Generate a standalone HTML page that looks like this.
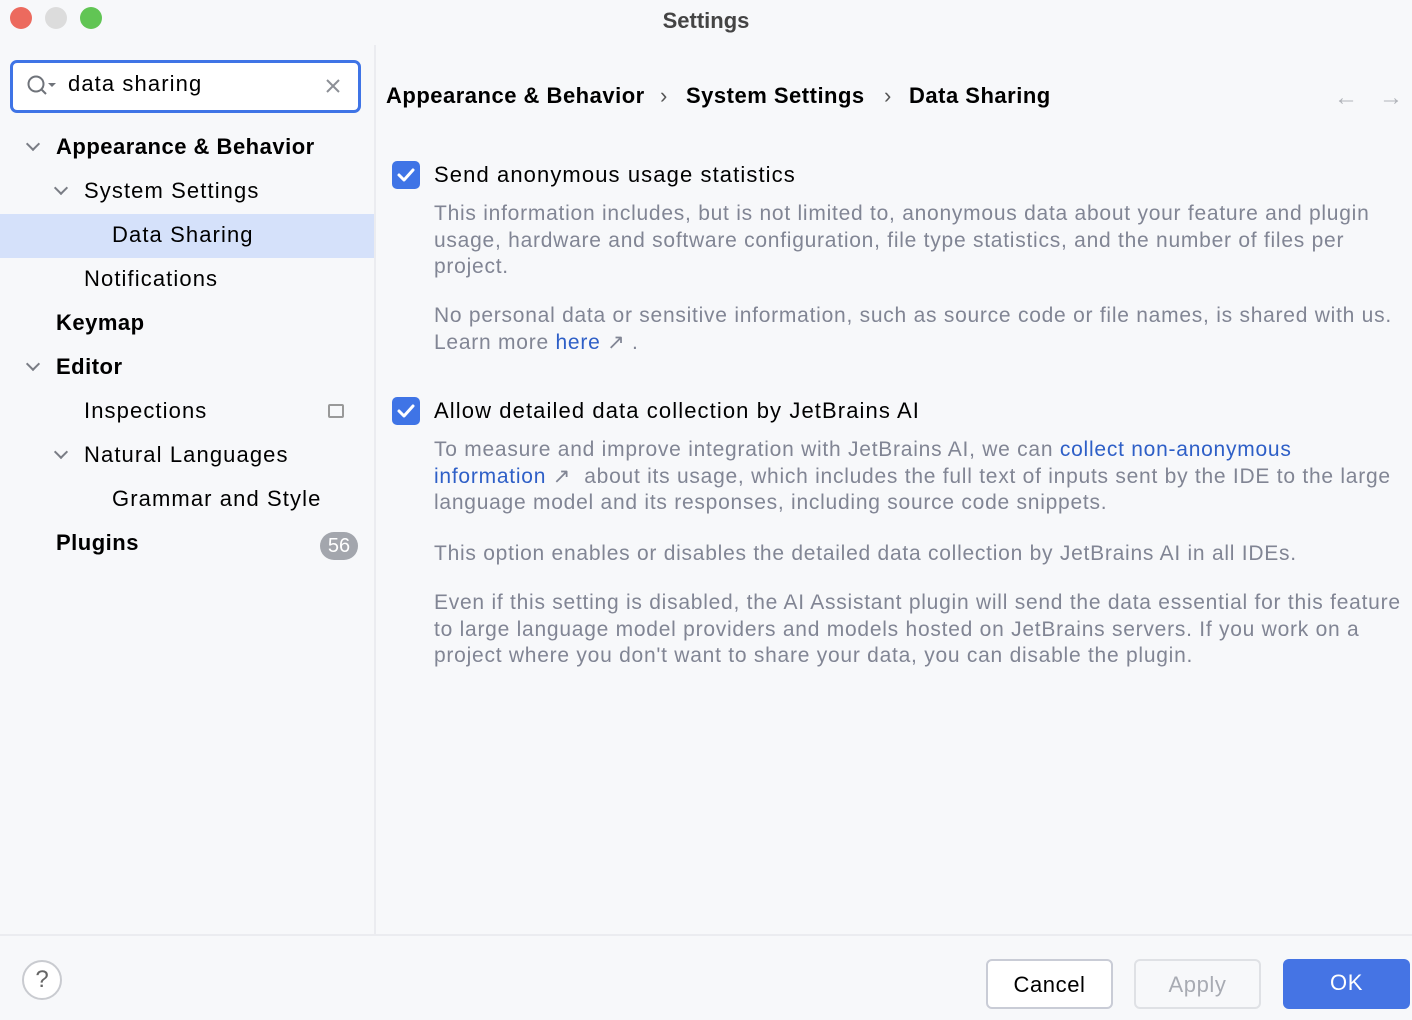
<!DOCTYPE html>
<html><head><meta charset="utf-8"><style>
*{margin:0;padding:0;box-sizing:border-box}
body{width:1412px;height:1020px;background:#f7f8fa;font-family:"Liberation Sans",sans-serif;position:relative;overflow:hidden;color:#000}
.a{position:absolute;white-space:nowrap}
.dot{position:absolute;top:7px;width:22px;height:22px;border-radius:50%}
.t{font-size:22px;letter-spacing:1.1px}
.b{font-weight:bold;letter-spacing:0.5px}
.g{color:#818594;font-size:21px;letter-spacing:0.75px;line-height:26.5px}
.lk{color:#2e5fc7}
.chev{position:absolute;width:10px;height:10px;border-right:2px solid #7a7d85;border-bottom:2px solid #7a7d85;transform:rotate(45deg)}
.cb{position:absolute;width:28px;height:28px;border-radius:5px;background:#3f74e6}
.btn{position:absolute;top:959px;height:50px;border-radius:6px;font-size:22px;text-align:center;line-height:48px;letter-spacing:0.6px}
</style></head><body>
<div class="dot" style="left:10px;background:#ec6a5e"></div>
<div class="dot" style="left:45px;background:#dcdcdc"></div>
<div class="dot" style="left:80px;background:#61c554"></div>
<div class="a" style="left:0;width:1412px;text-align:center;top:8px;font-size:22px;font-weight:bold;color:#444">Settings</div>
<div class="a" style="left:374px;top:45px;width:2px;height:890px;background:#ebecf0"></div>
<div class="a" style="left:0;top:934px;width:1412px;height:2px;background:#ebecf0"></div>
<div class="a" style="left:10px;top:60px;width:351px;height:53px;border:3px solid #3f74e6;border-radius:7px;background:#fff"></div>
<svg class="a" style="left:26px;top:74px" width="34" height="24"><circle cx="10" cy="10" r="7.5" fill="none" stroke="#6f737a" stroke-width="2"/><line x1="15" y1="15" x2="20" y2="20" stroke="#6f737a" stroke-width="2"/><path d="M22 9 l4 4 l4 -4z" fill="#6f737a"/></svg>
<div class="a t" style="left:68px;top:71px">data sharing</div>
<svg class="a" style="left:325px;top:78px" width="16" height="16"><path d="M2 2L14 14M14 2L2 14" stroke="#8c8f96" stroke-width="2"/></svg>
<div class="a" style="left:0;top:214px;width:374px;height:44px;background:#d5e1fa"></div>
<div class="chev" style="left:28px;top:139px"></div>
<div class="a t b" style="left:56px;top:134px">Appearance &amp; Behavior</div>
<div class="chev" style="left:56px;top:183px"></div>
<div class="a t" style="left:84px;top:178px">System Settings</div>
<div class="a t" style="left:112px;top:222px">Data Sharing</div>
<div class="a t" style="left:84px;top:266px">Notifications</div>
<div class="a t b" style="left:56px;top:310px">Keymap</div>
<div class="chev" style="left:28px;top:359px"></div>
<div class="a t b" style="left:56px;top:354px">Editor</div>
<div class="a t" style="left:84px;top:398px">Inspections</div>
<div class="a" style="left:328px;top:404px;width:16px;height:14px;border:2px solid #999;border-radius:2px"></div>
<div class="chev" style="left:56px;top:447px"></div>
<div class="a t" style="left:84px;top:442px">Natural Languages</div>
<div class="a t" style="left:112px;top:486px">Grammar and Style</div>
<div class="a t b" style="left:56px;top:530px">Plugins</div>
<div class="a" style="left:320px;top:532px;width:38px;height:28px;border-radius:14px;background:#a3a6ad;color:#fff;font-size:20px;text-align:center;line-height:28px">56</div>
<div class="a t b" style="left:386px;top:83px">Appearance &amp; Behavior</div>
<div class="a t" style="left:660px;top:83px;color:#555">›</div>
<div class="a t b" style="left:686px;top:83px">System Settings</div>
<div class="a t" style="left:884px;top:83px;color:#555">›</div>
<div class="a t b" style="left:909px;top:83px">Data Sharing</div>
<div class="a" style="left:1334px;top:84px;font-size:24px;color:#b0b3b9">←</div>
<div class="a" style="left:1379px;top:84px;font-size:24px;color:#b0b3b9">→</div>
<div class="cb" style="left:392px;top:161px"></div>
<svg class="a" style="left:392px;top:161px" width="28" height="28"><path d="M7 14l5 5l9-10" fill="none" stroke="#fff" stroke-width="3" stroke-linecap="round" stroke-linejoin="round"/></svg>
<div class="a t" style="left:434px;top:162px">Send anonymous usage statistics</div>
<div class="a g" style="left:434px;top:201px">This information includes, but is not limited to, anonymous data about your feature and plugin<br>usage, hardware and software configuration, file type statistics, and the number of files per<br>project.</div>
<div class="a g" style="left:434px;top:303px">No personal data or sensitive information, such as source code or file names, is shared with us.<br>Learn more <span class="lk">here</span> ↗ .</div>
<div class="cb" style="left:392px;top:397px"></div>
<svg class="a" style="left:392px;top:397px" width="28" height="28"><path d="M7 14l5 5l9-10" fill="none" stroke="#fff" stroke-width="3" stroke-linecap="round" stroke-linejoin="round"/></svg>
<div class="a t" style="left:434px;top:398px">Allow detailed data collection by JetBrains AI</div>
<div class="a g" style="left:434px;top:437px">To measure and improve integration with JetBrains AI, we can <span class="lk">collect non-anonymous</span><br><span class="lk">information</span> ↗ &nbsp;about its usage, which includes the full text of inputs sent by the IDE to the large<br>language model and its responses, including source code snippets.</div>
<div class="a g" style="left:434px;top:541px">This option enables or disables the detailed data collection by JetBrains AI in all IDEs.</div>
<div class="a g" style="left:434px;top:590px">Even if this setting is disabled, the AI Assistant plugin will send the data essential for this feature<br>to large language model providers and models hosted on JetBrains servers. If you work on a<br>project where you don't want to share your data, you can disable the plugin.</div>
<div class="a" style="left:22px;top:960px;width:40px;height:40px;border-radius:50%;border:2px solid #c9cbd0;background:#fff;text-align:center;line-height:36px;font-size:24px;color:#666">?</div>
<div class="btn" style="left:986px;width:127px;background:#fff;border:2px solid #c9ccd6">Cancel</div>
<div class="btn" style="left:1134px;width:127px;border:2px solid #dfe1e5;color:#a8abb3">Apply</div>
<div class="btn" style="left:1283px;width:127px;background:#4574e4;color:#fff">OK</div>
</body></html>
